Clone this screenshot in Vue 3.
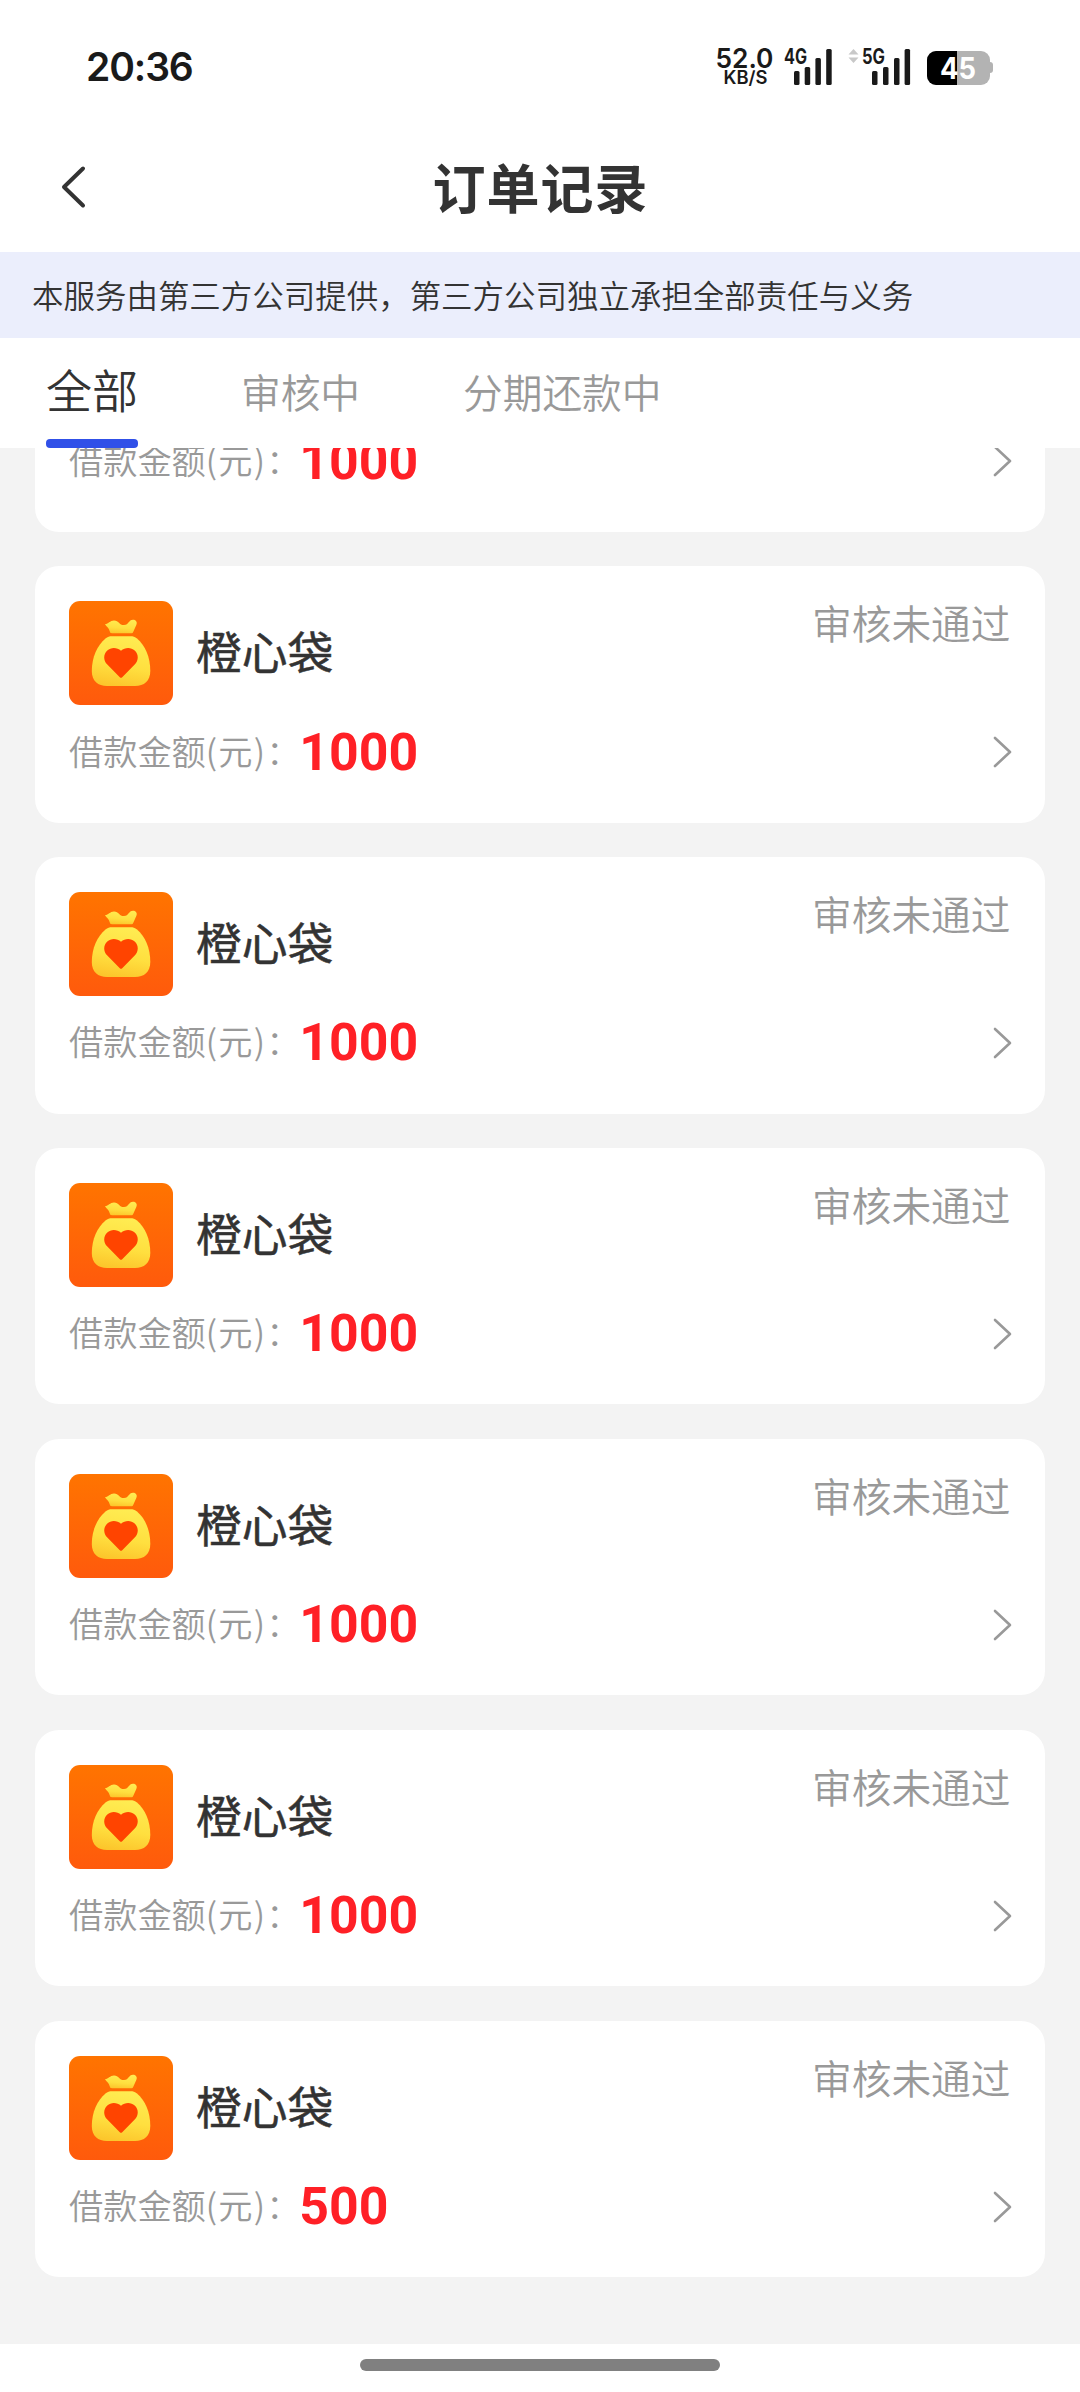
<script setup>
const tabs = ['全部', '审核中', '分期还款中']
const amounts = [1000, 1000, 1000, 1000, 1000, 1000, 500]
</script>

<template>
  <div class="screen">
    <div class="status-bar">
      <span class="clock">20:36</span>
      <div class="indicators">
        <svg class="speed" width="60" height="40" viewBox="0 0 60 40">
          <text x="-0.5" y="21.3" font-size="27" font-weight="600" textLength="58" lengthAdjust="spacingAndGlyphs">52.0</text>
          <text x="7.5" y="37.2" font-size="18" font-weight="600" textLength="44" lengthAdjust="spacingAndGlyphs">KB/S</text>
        </svg>
        <svg class="signal" width="48" height="40" viewBox="0 0 48 40">
          <text x="0" y="17" font-size="21" font-weight="700" textLength="23" lengthAdjust="spacingAndGlyphs">4G</text>
          <rect x="10" y="24" width="5.5" height="14" rx="1.5" />
          <rect x="20.7" y="20" width="5.5" height="18" rx="1.5" />
          <rect x="31.4" y="11" width="5.5" height="27" rx="1.5" />
          <rect x="42.2" y="2" width="5.5" height="36" rx="1.5" />
        </svg>
        <svg class="signal second" width="64" height="40" viewBox="0 0 64 40">
          <path d="M0.5 7.5L5.5 2L10.5 7.5ZM0.5 10.5H10.5L5.5 16Z" fill="#c8c8c8" />
          <text x="14" y="17" font-size="21" font-weight="700" textLength="23" lengthAdjust="spacingAndGlyphs">5G</text>
          <rect x="24" y="24" width="5.5" height="14" rx="1.5" />
          <rect x="35" y="20" width="5.5" height="18" rx="1.5" />
          <rect x="46" y="11" width="5.5" height="27" rx="1.5" />
          <rect x="56.6" y="2" width="5.5" height="36" rx="1.5" />
        </svg>
        <svg class="battery" width="67" height="40" viewBox="0 0 67 40">
          <rect x="58" y="15" width="8" height="11" rx="3" fill="#b3b3b3" />
          <rect x="0" y="4" width="63" height="34" rx="9" fill="#b3b3b3" />
          <path d="M30 4H9A9 9 0 0 0 0 13V29A9 9 0 0 0 9 38H30Z" fill="#000" />
          <text x="13" y="32.2" font-size="30" font-weight="700" textLength="36" lengthAdjust="spacingAndGlyphs" fill="#fff">45</text>
        </svg>
      </div>
    </div>

    <header class="nav">
      <svg class="back" width="30" height="44" viewBox="0 0 30 44">
        <path d="M24 3.5L5 22L24 40.5" fill="none" stroke="#333" stroke-width="4" stroke-linecap="round" stroke-linejoin="round" />
      </svg>
      <h1>订单记录</h1>
    </header>

    <div class="notice">本服务由第三方公司提供，第三方公司独立承担全部责任与义务</div>

    <nav class="tabs">
      <span v-for="(tab, i) in tabs" :key="tab" class="tab" :class="{ active: i === 0 }">{{ tab }}</span>
    </nav>

    <main class="scroller">
      <div class="list">
        <article v-for="(amount, i) in amounts" :key="i" class="card">
          <div class="card-head">
            <svg class="logo" width="104" height="104" viewBox="0 0 104 104">
              <defs>
                <linearGradient id="logoBg" x1="0" y1="0" x2="0" y2="1">
                  <stop offset="0" stop-color="#ff7400" />
                  <stop offset="1" stop-color="#ff5a0c" />
                </linearGradient>
                <linearGradient id="bag" x1="0.6" y1="0" x2="0.4" y2="1">
                  <stop offset="0" stop-color="#ffec52" />
                  <stop offset="0.6" stop-color="#ffdf3f" />
                  <stop offset="1" stop-color="#fcc62c" />
                </linearGradient>
              </defs>
              <rect width="104" height="104" rx="11" fill="url(#logoBg)" />
              <path d="M36.2 23C38.8 23.2 41 19.4 45 19.4C50 19.4 50 24 55 24C60 24 59.5 18.8 64 18.8C67.2 18.8 68.6 21.4 67.3 24L64.2 31C63.9 31.8 63.4 32.2 62.6 32.2H42.8C42 32.2 41.3 31.8 41 31L39.8 28C38.7 25.5 36 24.5 36.2 23Z" fill="url(#bag)" />
              <path d="M43 35.2H61.5C64 35.2 66 35.8 68 37.4C76 44 81.3 56 81.3 70C81.3 80 75 85 66 85H38C29 85 22.8 80 22.8 70C22.8 56 28.5 44 36.5 37.4C38.5 35.8 40.5 35.2 43 35.2Z" fill="url(#bag)" />
              <path d="M52 49.8C56 46.2 62 46 65.7 49.6C69.8 53.5 69.8 59.5 65.7 63.6L53.2 76.2C52.4 77 51.6 77 50.8 76.2L38.3 63.6C34.2 59.5 34.2 53.5 38.3 49.6C42 46 48 46.2 52 49.8Z" fill="#ff4400" />
            </svg>
            <span class="name">橙心袋</span>
            <span class="state">审核未通过</span>
          </div>
          <div class="card-row">
            <span class="label">借款金额<span class="unit">(元)</span>：</span>
            <span class="amount">{{ amount }}</span>
            <svg class="arrow" width="21" height="34" viewBox="0 0 21 34">
              <path d="M3 3L18 17L3 31" fill="none" stroke="#999" stroke-width="2.6" stroke-linecap="round" stroke-linejoin="round" />
            </svg>
          </div>
        </article>
      </div>
    </main>

    <footer class="home"><i></i></footer>
  </div>
</template>

<style>
body {
  margin: 0;
  background: #fff;
}
</style>

<style scoped>
.screen {
  width: 1080px;
  height: 2392px;
  display: flex;
  flex-direction: column;
  overflow: hidden;
  background: #fff;
  color: #333;
  font-family: "Noto Sans CJK SC", sans-serif;
}
svg { overflow: visible; }
.status-bar {
  flex: none;
  height: 134px;
  box-sizing: border-box;
  padding: 47px 87px 0 86px;
  display: flex;
  justify-content: space-between;
  font-family: Inter, sans-serif;
  color: #1a1a1a;
}
.clock {
  font-size: 39px;
  line-height: 39px;
  font-weight: 600;
  letter-spacing: -1.1px;
}
.indicators {
  display: flex;
  height: 40px;
  fill: #1a1a1a;
}
.speed { margin-right: 8px; }
.second { margin-left: 16px; }
.battery { margin-left: 15px; margin-right: -1px; }
.nav {
  flex: none;
  height: 118px;
  display: flex;
  align-items: center;
  padding: 0 57px 0 59px;
}
.nav h1 {
  flex: 1;
  margin: -15px 31px 0 0;
  text-align: center;
  font-size: 53px;
  line-height: 60px;
  letter-spacing: 1px;
  font-weight: 700;
}
.back { margin-top: -12px; }
.notice {
  flex: none;
  height: 86px;
  line-height: 84px;
  padding-left: 32px;
  background: #ebeefc;
  font-size: 31.48px;
  font-weight: 350;
  white-space: nowrap;
}
.tabs {
  flex: none;
  height: 110px;
  padding-left: 46px;
  display: flex;
  gap: 103px;
}
.tab {
  height: 110px;
  line-height: 106px;
  font-size: 39.7px;
  font-weight: 350;
  color: #999;
}
.tab.active {
  font-size: 46px;
  line-height: 101px;
  color: #333;
}
.tab.active::after {
  content: "";
  display: block;
  height: 9px;
  border-radius: 4px;
  background: #3050e8;
}
.scroller {
  flex: none;
  height: 1896px;
  overflow: hidden;
  background: #f3f3f3;
}
.list {
  margin-top: -172.8px;
  padding: 0 35px;
  display: flex;
  flex-direction: column;
  gap: 34.3px;
}
.card {
  height: 256.6px;
  box-sizing: border-box;
  padding: 35px 34px 0;
  border-radius: 24px;
  background: #fff;
}
.card-head {
  display: flex;
  height: 104px;
}
.logo { flex: none; }
.name {
  margin-left: 23px;
  font-size: 45.8px;
  line-height: 98px;
  font-weight: 400;
  -webkit-text-stroke: 0.5px #333;
}
.state {
  margin-left: auto;
  margin-right: 0.5px;
  font-size: 39.7px;
  line-height: 41px;
  font-weight: 350;
  color: #999;
}
.card-row {
  display: flex;
  align-items: center;
  height: 93px;
}
.label {
  width: 230.3px;
  margin-top: -4px;
  font-size: 34.2px;
  font-weight: 350;
  color: #999;
  white-space: nowrap;
}
.unit { letter-spacing: 1.2px; }
.amount {
  margin-top: 1px;
  font-family: Roboto, sans-serif;
  font-size: 51.8px;
  font-weight: 700;
  color: #ff2026;
}
.arrow { margin-top: 1px; margin-left: auto; margin-right: -2px; }
.home {
  flex: none;
  height: 48px;
  display: flex;
  justify-content: center;
}
.home i {
  width: 360px;
  height: 12px;
  margin-top: 15px;
  border-radius: 6px;
  background: #808080;
}
</style>
